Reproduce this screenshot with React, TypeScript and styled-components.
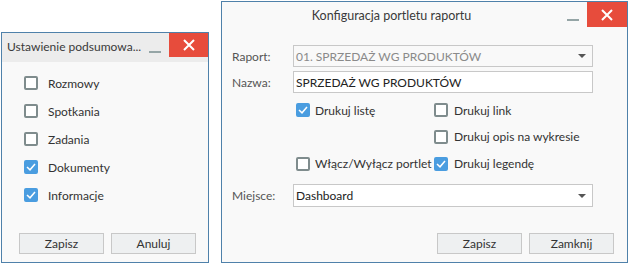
import React, { FC } from 'react';
import styled, { createGlobalStyle } from 'styled-components';

const GlobalStyle = createGlobalStyle`
  html, body {
    margin: 0;
    padding: 0;
    background: #ffffff;
  }
  body {
    font-family: Lato, "Open Sans", "Liberation Sans", sans-serif;
    font-size: 12px;
    color: #333333;
  }
`;

const Page = styled.div`
  display: flex;
  align-items: flex-end;
  gap: 12px;
  padding: 1px 0 0 1px;
  height: 262px;
`;

const Window = styled.div<{ $w: number; $h: number }>`
  width: ${(p) => p.$w}px;
  height: ${(p) => p.$h}px;
  box-sizing: border-box;
  border: 1px solid #4f81aa;
  background: #f9f9f9;
  display: flex;
  flex-direction: column;
`;

const TitleBar = styled.div<{ $gray?: boolean; $h: number }>`
  display: flex;
  align-items: flex-start;
  height: ${(p) => p.$h}px;
  background: ${(p) => (p.$gray ? '#ececec' : 'transparent')};
  flex-shrink: 0;
`;

const Title = styled.div<{ $center?: boolean; $top: number; $size: number }>`
  flex: 1;
  min-width: 0;
  padding: ${(p) => p.$top}px 0 0 ${(p) => (p.$center ? 0 : 5)}px;
  text-align: ${(p) => (p.$center ? 'center' : 'left')};
  font-size: ${(p) => p.$size}px;
  color: #3a3a3a;
  white-space: nowrap;
`;

const Minimize = styled.div<{ $top: number }>`
  width: 12px;
  height: 2px;
  flex-shrink: 0;
  background: #95a5a6;
  margin: ${(p) => p.$top}px 8px 0 6px;
`;

const CloseBtn = styled.div<{ $w: number; $h: number }>`
  width: ${(p) => p.$w}px;
  height: ${(p) => p.$h}px;
  flex-shrink: 0;
  background: #e74c3c;
  display: flex;
  align-items: center;
  justify-content: center;
`;

const CloseIcon = () => (
  <svg width="12" height="12" viewBox="0 0 12 12">
    <path d="M1 1L11 11M11 1L1 11" stroke="#ffffff" strokeWidth="2" />
  </svg>
);

const Body = styled.div<{ $pad: string }>`
  flex: 1;
  display: flex;
  flex-direction: column;
  padding: ${(p) => p.$pad};
`;

const CheckList = styled.div`
  display: flex;
  flex-direction: column;
`;

const CheckRow = styled.label<{ $h: number; $gap: number }>`
  display: flex;
  align-items: center;
  height: ${(p) => p.$h}px;
  gap: ${(p) => p.$gap}px;
  color: #333333;
  font-size: 12px;
  white-space: nowrap;
`;

const Box = styled.span<{ $on: boolean }>`
  width: 14px;
  height: 14px;
  box-sizing: border-box;
  border-radius: 2px;
  border: 2px solid ${(p) => (p.$on ? '#4a9de0' : '#7f8c8d')};
  background: ${(p) => (p.$on ? '#4a9de0' : '#ffffff')};
  display: flex;
  align-items: center;
  justify-content: center;
  flex-shrink: 0;
`;

const CheckMark = () => (
  <svg width="10" height="8" viewBox="0 0 10 8">
    <path d="M1 4L4 6.8L9 1" stroke="#ffffff" strokeWidth="1.5" fill="none" />
  </svg>
);

type CheckProps = { label: string; on?: boolean; h?: number; gap?: number };

const Check: FC<CheckProps> = ({ label, on = false, h = 28, gap = 10 }) => (
  <CheckRow $h={h} $gap={gap}>
    <Box $on={on}>{on && <CheckMark />}</Box>
    {label}
  </CheckRow>
);

const Buttons = styled.div<{ $justify: string; $shift?: number }>`
  margin-top: auto;
  margin-left: ${(p) => p.$shift || 0}px;
  display: flex;
  gap: 7px;
  justify-content: ${(p) => p.$justify};
`;

const Button = styled.button`
  width: 85px;
  height: 21px;
  box-sizing: border-box;
  border: 1px solid #c8c8c8;
  background: #eef0f1;
  font-family: inherit;
  font-size: 12px;
  color: #333333;
  padding: 0;
  cursor: pointer;
`;

const FormRow = styled.div<{ $mt?: number }>`
  display: flex;
  align-items: center;
  margin-top: ${(p) => p.$mt || 0}px;
`;

const Label = styled.div`
  width: 61px;
  font-size: 12px;
  color: #555555;
`;

const Field = styled.div<{ $disabled?: boolean; $h?: number }>`
  width: 300px;
  height: ${(p) => p.$h || 22}px;
  box-sizing: border-box;
  border: 1px solid #c8c8c8;
  background: ${(p) => (p.$disabled ? '#f9f9f9' : '#ffffff')};
  color: ${(p) => (p.$disabled ? '#8a8a8a' : '#222222')};
  display: flex;
  align-items: center;
  padding: 0 6px 0 2px;
  font-size: 12px;
`;

const FieldText = styled.span`
  flex: 1;
  white-space: nowrap;
`;

const Arrow = styled.span`
  width: 0;
  height: 0;
  border-left: 4px solid transparent;
  border-right: 4px solid transparent;
  border-top: 4px solid #555555;
`;

const Options = styled.div`
  display: grid;
  grid-template-columns: 138px auto;
  grid-template-rows: 26px 27px 27px;
  margin: 4px 0 0 64px;
`;

const Empty = styled.div``;

const SummaryWindow = () => (
  <Window $w={208} $h={231}>
    <TitleBar $gray $h={29}>
      <Title $top={6} $size={12}>Ustawienie podsumowa...</Title>
      <Minimize $top={18} />
      <CloseBtn $w={39} $h={24}>
        <CloseIcon />
      </CloseBtn>
    </TitleBar>
    <Body $pad="7px 11px 8px 22px">
      <CheckList>
        <Check label="Rozmowy" />
        <Check label="Spotkania" />
        <Check label="Zadania" />
        <Check label="Dokumenty" on />
        <Check label="Informacje" on />
      </CheckList>
      <Buttons $justify="flex-start" $shift={-5}>
        <Button>Zapisz</Button>
        <Button>Anuluj</Button>
      </Buttons>
    </Body>
  </Window>
);

const ReportWindow = () => (
  <Window $w={407} $h={262}>
    <TitleBar $h={25}>
      <Title $center $top={6} $size={12.5}>Konfiguracja portletu raportu</Title>
      <Minimize $top={17} />
      <CloseBtn $w={40} $h={25}>
        <CloseIcon />
      </CloseBtn>
    </TitleBar>
    <Body $pad="18px 13px 8px 10px">
      <FormRow>
        <Label>Raport:</Label>
        <Field $disabled>
          <FieldText>01. SPRZEDAŻ WG PRODUKTÓW</FieldText>
          <Arrow />
        </Field>
      </FormRow>
      <FormRow $mt={4}>
        <Label>Nazwa:</Label>
        <Field>
          <FieldText>SPRZEDAŻ WG PRODUKTÓW</FieldText>
        </Field>
      </FormRow>
      <Options>
        <Check label="Drukuj listę" on h={26} gap={5} />
        <Check label="Drukuj link" h={26} gap={6} />
        <Empty />
        <Check label="Drukuj opis na wykresie" h={27} gap={6} />
        <Check label="Włącz/Wyłącz portlet" h={27} gap={5} />
        <Check label="Drukuj legendę" on h={27} gap={6} />
      </Options>
      <FormRow $mt={7}>
        <Label>Miejsce:</Label>
        <Field $h={23}>
          <FieldText>Dashboard</FieldText>
          <Arrow />
        </Field>
      </FormRow>
      <Buttons $justify="flex-end">
        <Button>Zapisz</Button>
        <Button>Zamknij</Button>
      </Buttons>
    </Body>
  </Window>
);

export default function App() {
  return (
    <>
      <GlobalStyle />
      <Page>
        <SummaryWindow />
        <ReportWindow />
      </Page>
    </>
  );
}
